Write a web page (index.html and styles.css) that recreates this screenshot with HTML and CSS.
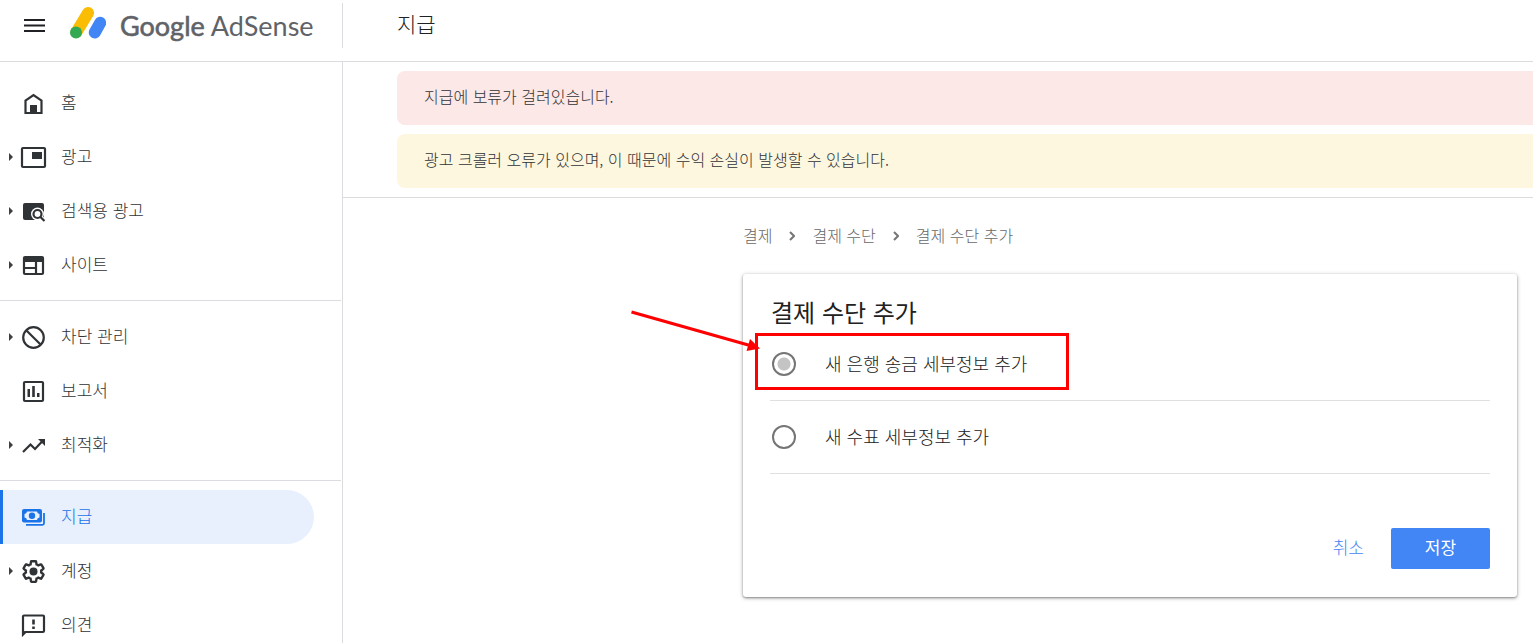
FILE: index.html
```html
<!DOCTYPE html>
<html lang="ko">
<head>
    <meta charset="UTF-8">
    <meta name="viewport" content="width=device-width, initial-scale=1.0">
    <title>Google AdSense - 지급</title>
    <link rel="stylesheet" href="styles.css">
</head>
<body>
    <header class="header">
        <div class="brand">
            <button class="menu-button" type="button" aria-label="메뉴">
                <svg width="21" height="14" viewBox="0 0 21 14"><path d="M0 1h21M0 6.500h21M0 12h21" stroke="#202124" stroke-width="2"/></svg>
            </button>
            <a class="logo" href="#">
                <svg width="36" height="39" viewBox="0 0 36 39" fill="none" stroke-linecap="round" stroke-width="12">
                    <path d="M6.500 26L18 7" stroke="#fbbc04"/>
                    <path d="M24.800 26.500L30.200 16.800" stroke="#4285f4"/>
                    <circle cx="6" cy="26.600" r="6" fill="#34a853"/>
                </svg>
                <span class="logo-text"><span class="logo-google">Google</span> AdSense</span>
            </a>
        </div>
        <h1 class="page-title">지급</h1>
    </header>

    <div class="layout">
        <nav class="sidebar">
            <div class="nav-group">
                <a class="nav-item" href="#">
                    <svg class="icon" viewBox="0 0 28 28"><path class="line" d="M5.500 24V11.500L13.500 6l8 5.500V24z"/><path d="M10 16h7v8h-7z"/></svg>
                    <span>홈</span>
                </a>
                <a class="nav-item expandable" href="#">
                    <svg class="icon" viewBox="0 0 28 28"><rect class="line" x="2" y="5" width="23" height="19" rx="1"/><path d="M12 9h10v7H12z"/></svg>
                    <span>광고</span>
                </a>
                <a class="nav-item expandable" href="#">
                    <svg class="icon" viewBox="0 0 28 28"><rect x="3" y="6" width="21" height="17" rx="2"/><circle cx="17.500" cy="17" r="6.500" fill="#fff"/><path d="M19 19l6 6" stroke="#fff" stroke-width="5"/><circle class="line" cx="17.500" cy="17" r="4"/><path class="line" d="M20 19.500l4.500 4.500"/></svg>
                    <span>검색용 광고</span>
                </a>
                <a class="nav-item expandable" href="#">
                    <svg class="icon" viewBox="0 0 28 28"><rect class="line" x="4" y="6" width="19" height="17" rx="1"/><path d="M4 6h19v5H4z"/><path class="line" d="M5 17h10M16 11v12"/></svg>
                    <span>사이트</span>
                </a>
            </div>
            <div class="nav-group">
                <a class="nav-item expandable" href="#">
                    <svg class="icon" viewBox="0 0 28 28"><circle class="line" cx="13.500" cy="14.500" r="10.300"/><path class="line" d="M6.200 7.200l14.600 14.600"/></svg>
                    <span>차단 관리</span>
                </a>
                <a class="nav-item" href="#">
                    <svg class="icon" viewBox="0 0 28 28"><rect class="line" x="4" y="5" width="19" height="19" rx="1"/><path d="M7.500 12H10v8H7.500zM12.200 9h2.600v11h-2.600zM17 16h2.500v4H17z"/></svg>
                    <span>보고서</span>
                </a>
                <a class="nav-item expandable" href="#">
                    <svg class="icon" viewBox="0 0 28 28"><path class="line" stroke-width="2.600" d="M3 21l7.500-7.500 4.500 4.500 8.500-9"/><path d="M18 8h7v7z"/></svg>
                    <span>최적화</span>
                </a>
            </div>
            <div class="nav-group">
                <a class="nav-item active" href="#">
                    <svg class="icon" viewBox="0 0 28 28"><rect x="2" y="6" width="20" height="13.500" rx="2"/><path d="M7 8.500h10a3 3 0 0 0 2.500 2.500v3.500A3 3 0 0 0 17 17H7a3 3 0 0 0-2.500-2.500V11A3 3 0 0 0 7 8.500z" fill="#e8f0fe"/><circle cx="12" cy="12.700" r="3.200"/><path d="M6 21.800h16.500a1.500 1.500 0 0 0 1.500-1.500V10" fill="none" stroke="currentColor" stroke-width="1.800"/></svg>
                    <span>지급</span>
                </a>
                <a class="nav-item expandable" href="#">
                    <svg class="icon" viewBox="0 0 28 28"><path class="line" transform="translate(.7 1.700) scale(1.070)" d="M19.140 12.940c.04-.3.06-.61.06-.94 0-.32-.02-.64-.07-.94l2.030-1.580c.18-.14.23-.41.12-.61l-1.920-3.320c-.12-.22-.37-.29-.59-.22l-2.390.96c-.5-.38-1.030-.7-1.620-.94L14.400 2.810c-.04-.24-.24-.41-.48-.41h-3.840c-.24 0-.43.17-.47.41L9.250 5.350C8.660 5.590 8.120 5.920 7.630 6.290L5.240 5.330c-.22-.08-.47 0-.59.22L2.740 8.870c-.12.21-.08.47.12.61l2.030 1.580C4.840 11.360 4.800 11.690 4.800 12s.02.64.07.94l-2.030 1.580c-.18.14-.23.41-.12.61l1.920 3.320c.12.22.37.29.59.22l2.390-.96c.5.38 1.030.7 1.620.94l.36 2.540c.05.24.24.41.48.41h3.840c.24 0 .44-.17.47-.41l.36-2.540c.59-.24 1.130-.56 1.620-.94l2.390.96c.22.08.47 0 .59-.22l1.920-3.320c.12-.22.07-.47-.12-.61z"/><circle cx="13.500" cy="14.500" r="4"/></svg>
                    <span>계정</span>
                </a>
                <a class="nav-item" href="#">
                    <svg class="icon" viewBox="0 0 28 28"><path class="line" d="M3 23V5.500q0-1 1-1h19q1 0 1 1V20q0 1-1 1H5z"/><path d="M2 21v5l5-5zM12.200 8.500h2.600v5h-2.600zM12.200 15.500h2.600V18h-2.600z"/></svg>
                    <span>의견</span>
                </a>
            </div>
        </nav>

        <main class="main">
            <div class="alerts">
                <div class="alert alert-error">지급에 보류가 걸려있습니다.</div>
                <div class="alert alert-warning">광고 크롤러 오류가 있으며, 이 때문에 수익 손실이 발생할 수 있습니다.</div>
            </div>

            <div class="content">
                <nav class="breadcrumb">
                    <a href="#">결제</a>
                    <svg width="6" height="10" viewBox="0 0 6 10"><path d="M1 1l4 4-4 4" fill="none" stroke="#757575" stroke-width="2"/></svg>
                    <a href="#">결제 수단</a>
                    <svg width="6" height="10" viewBox="0 0 6 10"><path d="M1 1l4 4-4 4" fill="none" stroke="#757575" stroke-width="2"/></svg>
                    <a href="#">결제 수단 추가</a>
                </nav>

                <form class="card">
                    <h2 class="card-title">결제 수단 추가</h2>
                    <div class="option">
                        <input type="radio" id="bank" name="method" checked>
                        <label for="bank">새 은행 송금 세부정보 추가</label>
                        <!-- red callout around the bank transfer option -->
                        <div class="callout"></div>
                        <svg class="callout-arrow" width="132" height="46" viewBox="0 0 132 46"><path d="M1.500 4L120 37.500" stroke="#f00" stroke-width="3"/><path d="M120 31L130 40.500L116.500 43z" fill="#f00"/></svg>
                    </div>
                    <div class="option">
                        <input type="radio" id="check" name="method">
                        <label for="check">새 수표 세부정보 추가</label>
                    </div>
                    <div class="actions">
                        <button class="cancel-button" type="button">취소</button>
                        <button class="save-button" type="button">저장</button>
                    </div>
                </form>
            </div>
        </main>
    </div>
</body>
</html>
```
FILE: styles.css
```css
* {
    box-sizing: border-box;
}
body {
    margin: 0;
    height: 100vh;
    overflow: hidden;
    display: flex;
    flex-direction: column;
    font-family: "Noto Sans CJK KR", sans-serif;
    font-weight: 300;
    color: #303336;
    background-color: #fff;
}
a {
    color: inherit;
    text-decoration: none;
}
button {
    font-family: inherit;
    font-weight: inherit;
    font-size: 17px;
    border: none;
    padding: 0 0 4px;
    background: none;
    cursor: pointer;
}

/* Header */
.header {
    display: flex;
    flex: none;
    height: 62px;
    border-bottom: 1px solid #dadce0;
}
.brand {
    display: flex;
    align-items: center;
    width: 343px;
    height: 45px;
    margin-top: 3px;
    padding-left: 24px;
    border-right: 1px solid #dadce0;
}
.menu-button {
    display: flex;
    padding: 0;
}
.logo {
    display: flex;
    align-items: center;
    gap: 14px;
    margin-left: 25px;
}
.logo-text {
    font-family: Lato, sans-serif;
    font-weight: 400;
    font-size: 27px;
    line-height: 36px;
    color: #5f6368;
}
.logo-google {
    -webkit-text-stroke: 0.6px #5f6368;
}
.page-title {
    margin: 0;
    padding-left: 54px;
    font-size: 21px;
    font-weight: 300;
    line-height: 46px;
    color: #202124;
}

/* Sidebar */
.layout {
    display: flex;
    flex: 1;
    min-height: 0;
}
.sidebar {
    flex: none;
    width: 343px;
    padding: 5px 1px 0 0;
    border-right: 1px solid #dadce0;
    overflow: hidden;
}
.nav-group {
    padding: 9px 0 8px;
    border-bottom: 1px solid #dadce0;
}
.nav-item {
    position: relative;
    display: flex;
    align-items: center;
    gap: 13px;
    height: 54px;
    margin-right: 27px;
    padding-left: 20px;
    font-size: 17px;
    line-height: 24px;
}
.nav-item span,
.breadcrumb a,
.option label {
    padding-bottom: 2px;
}
.expandable::before {
    content: "";
    position: absolute;
    left: 9px;
    top: 23px;
    border: 4px solid transparent;
    border-left-color: #3c4043;
    border-right-width: 0;
}
.active {
    padding-left: 17px;
    border-left: 3px solid #1a73e8;
    border-radius: 0 27px 27px 0;
    background-color: #e8f0fe;
    color: #1a73e8;
}
.icon {
    width: 28px;
    height: 28px;
    fill: currentColor;
}
.icon .line {
    fill: none;
    stroke: currentColor;
    stroke-width: 2.2;
}

/* Main */
.main {
    flex: 1;
    min-width: 0;
}
.alerts {
    display: flex;
    flex-direction: column;
    gap: 9px;
    padding: 9px 0 9px 54px;
    border-bottom: 1px solid #dadce0;
}
.alert {
    padding: 13px 27px 17px;
    border-radius: 8px 0 0 8px;
    font-size: 16px;
    line-height: 24px;
}
.alert-error {
    background-color: #fce8e6;
}
.alert-warning {
    background-color: #fef7e0;
}
.content {
    padding: 0 16px 0 400px;
}
.breadcrumb {
    display: flex;
    align-items: center;
    height: 76px;
    gap: 17px;
    font-size: 16px;
    line-height: 24px;
    color: #686868;
}

/* Card */
.card {
    padding: 23px 27px 28px;
    border-radius: 3px;
    box-shadow: 0 1px 4px rgba(0, 0, 0, 0.3), 0 1px 2px rgba(0, 0, 0, 0.3);
    color: #212121;
}
.card-title {
    margin: 0;
    padding: 0 0 1px 1px;
    font-size: 24px;
    font-weight: 400;
    line-height: 30px;
}
.option {
    position: relative;
    display: flex;
    align-items: center;
    gap: 29px;
    height: 73px;
    border-bottom: 1px solid #e0e0e0;
    font-size: 18px;
    line-height: 24px;
}
.option input {
    appearance: none;
    width: 24px;
    height: 24px;
    margin: 0 0 0 2px;
    border: 2px solid #757575;
    border-radius: 50%;
}
.option input:checked {
    background: radial-gradient(circle, #c4c4c4 6px, transparent 7px);
}
.callout {
    position: absolute;
    left: -15px;
    top: 5px;
    width: 314px;
    height: 57px;
    border: 3px solid #f00;
}
.callout-arrow {
    position: absolute;
    left: -140px;
    top: -20px;
}
.actions {
    display: flex;
    justify-content: flex-end;
    gap: 27px;
    margin-top: 54px;
}
.cancel-button {
    color: #4285f4;
}
.save-button {
    width: 99px;
    height: 41px;
    border-radius: 2px;
    background-color: #4285f4;
    color: #fff;
    font-weight: 400;
}
```
